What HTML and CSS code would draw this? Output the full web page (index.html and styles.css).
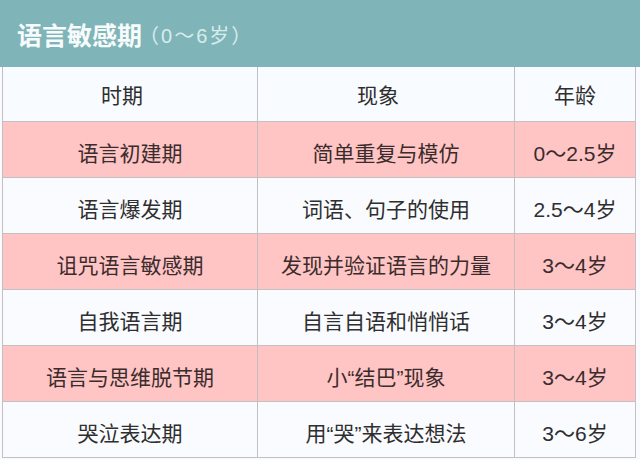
FILE: index.html
```html
<!DOCTYPE html>
<html lang="zh">
<head>
<meta charset="utf-8">
<link rel="stylesheet" href="styles.css">
</head>
<body>
<div class="page">
  <div class="title"><span class="main">语言敏感期</span><span class="sub">（0～6岁）</span></div>
  <table class="grid">
    <colgroup><col class="c1"><col class="c2"><col class="c3"></colgroup>
    <thead>
      <tr class="head"><th>时期</th><th>现象</th><th>年龄</th></tr>
    </thead>
    <tbody>
      <tr class="pink"><td>语言初建期</td><td>简单重复与模仿</td><td>0～2.5岁</td></tr>
      <tr class="white"><td>语言爆发期</td><td>词语、句子的使用</td><td>2.5～4岁</td></tr>
      <tr class="pink"><td>诅咒语言敏感期</td><td>发现并验证语言的力量</td><td>3～4岁</td></tr>
      <tr class="white"><td>自我语言期</td><td>自言自语和悄悄话</td><td>3～4岁</td></tr>
      <tr class="pink"><td>语言与思维脱节期</td><td>小“结巴”现象</td><td>3～4岁</td></tr>
      <tr class="white"><td>哭泣表达期</td><td>用“哭”来表达想法</td><td>3～6岁</td></tr>
    </tbody>
  </table>
</div>
</body>
</html>
```
FILE: styles.css
```css
html, body {
  margin: 0;
  padding: 0;
  background: #f9fbff;
}
.page {
  width: 640px;
  height: 460px;
  overflow: hidden;
  font-family: "Liberation Sans", "Noto Sans CJK SC", sans-serif;
  color: #333;
}
.title {
  height: 67px;
  background: #7fb5b8;
  display: flex;
  align-items: center;
  padding-left: 17px;
  box-sizing: border-box;
}
.title .main {
  font-size: 25px;
  font-weight: 700;
  color: #f7fbfb;
}
.title .sub {
  font-size: 20px;
  color: #d9ecec;
  margin-left: -3px;
  margin-top: 2px;
  letter-spacing: 2px;
}
.grid {
  margin-left: 2px;
  width: 633px;
  border-collapse: collapse;
  table-layout: fixed;
}
.c1 { width: 255px; }
.c2 { width: 257px; }
.c3 { width: 121px; }
.grid th, .grid td {
  border: 1px solid #c4bfc0;
  text-align: center;
  font-size: 21px;
  padding: 0;
  color: #2e2e2e;
}
.grid th {
  font-weight: 400;
  height: 54px;
  padding-right: 16px;
  border-top: none;
}
.grid th:last-child { padding-right: 0; }
.grid td {
  height: 56px;
  padding-top: 5px;
  box-sizing: border-box;
}
.head { background: #f8fbff; }
.pink { background: #ffc4c4; }
.pink td { color: #3a2c2c; }
.white { background: #f9fbff; }
```
